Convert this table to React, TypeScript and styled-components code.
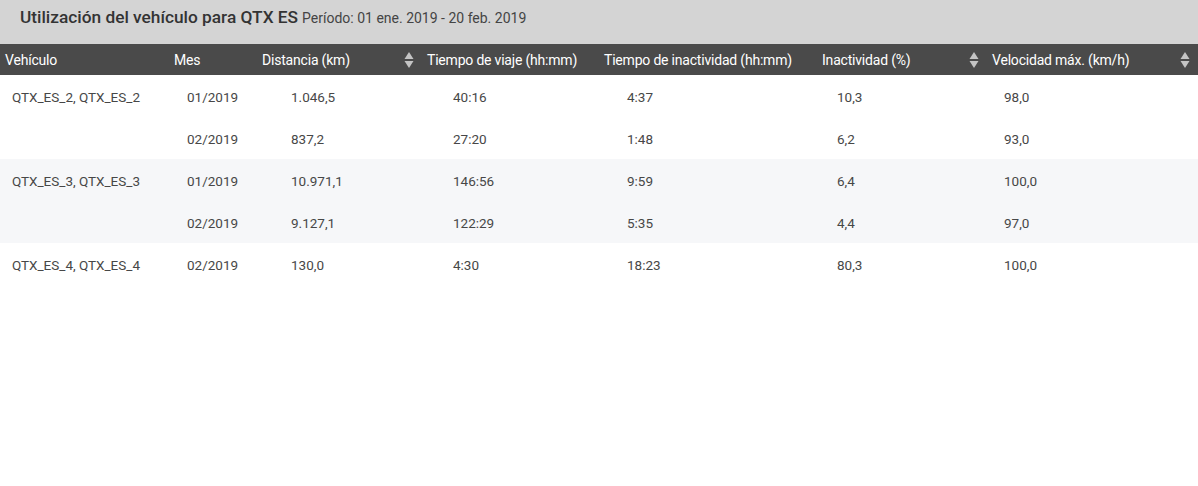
import React from "react";
import styled, { createGlobalStyle } from "styled-components";

const GlobalStyle = createGlobalStyle`
  html, body { margin: 0; padding: 0; background: #ffffff; }
  body { font-family: Roboto, "Liberation Sans", sans-serif; }
`;

const COLS = "169px 88px 165px 177px 218px 170px 211px";

const Page = styled.div`
  width: 1198px;
  height: 486px;
  background: #ffffff;
  display: flex;
  flex-direction: column;
`;

const TitleBar = styled.div`
  height: 44px;
  background: #d4d4d4;
  display: flex;
  align-items: flex-start;
  padding: 6px 0 0 20px;
  box-sizing: border-box;
  gap: 4px;
`;

const Title = styled.span`
  font-size: 17.3px;
  font-weight: 500;
  color: #333333;
  line-height: 22px;
`;

const Period = styled.span`
  font-size: 14px;
  color: #444444;
  line-height: 22px;
  padding-top: 1px;
`;

const HeaderRow = styled.div`
  display: grid;
  grid-template-columns: ${COLS};
  height: 31px;
  background: #4a4a4a;
`;

const HeadCell = styled.div`
  display: flex;
  align-items: center;
  justify-content: space-between;
  padding: 0 8px 0 5px;
  color: #ffffff;
  font-size: 14px;
  letter-spacing: -0.2px;
  white-space: nowrap;
`;

const SortIcon = styled.svg`
  width: 10px;
  height: 18px;
  flex: none;
`;

const Group = styled.div<{ $shade: boolean }>`
  background: ${(p) => (p.$shade ? "#f6f7f9" : "#ffffff")};
`;

const Row = styled.div`
  display: grid;
  grid-template-columns: ${COLS};
  height: 42px;
  align-items: center;
`;

const Cell = styled.div<{ $pad: number }>`
  padding: 2px 0 0 ${(p) => p.$pad}px;
  font-size: 13.5px;
  color: #474747;
  white-space: nowrap;
`;

const BODY_PAD = [12, 18, 34, 31, 28, 20, 17];

const headers: { label: string; sort?: boolean }[] = [
  { label: "Vehículo" },
  { label: "Mes" },
  { label: "Distancia (km)", sort: true },
  { label: "Tiempo de viaje (hh:mm)" },
  { label: "Tiempo de inactividad (hh:mm)" },
  { label: "Inactividad (%)", sort: true },
  { label: "Velocidad máx. (km/h)", sort: true },
];

const groups: { vehicle: string; rows: string[][] }[] = [
  {
    vehicle: "QTX_ES_2, QTX_ES_2",
    rows: [
      ["01/2019", "1.046,5", "40:16", "4:37", "10,3", "98,0"],
      ["02/2019", "837,2", "27:20", "1:48", "6,2", "93,0"],
    ],
  },
  {
    vehicle: "QTX_ES_3, QTX_ES_3",
    rows: [
      ["01/2019", "10.971,1", "146:56", "9:59", "6,4", "100,0"],
      ["02/2019", "9.127,1", "122:29", "5:35", "4,4", "97,0"],
    ],
  },
  {
    vehicle: "QTX_ES_4, QTX_ES_4",
    rows: [["02/2019", "130,0", "4:30", "18:23", "80,3", "100,0"]],
  },
];

const Sort = () => (
  <SortIcon viewBox="0 0 10 18">
    <path d="M5 1 L9.5 8 L0.5 8 Z" fill="#c4c4c4" />
    <path d="M5 17 L9.5 10 L0.5 10 Z" fill="#c4c4c4" />
  </SortIcon>
);

export default function App() {
  return (
    <>
      <GlobalStyle />
      <Page>
        <TitleBar>
          <Title>Utilización del vehículo para QTX ES</Title>
          <Period>Período: 01 ene. 2019 - 20 feb. 2019</Period>
        </TitleBar>
        <HeaderRow>
          {headers.map((h) => (
            <HeadCell key={h.label}>
              <span>{h.label}</span>
              {h.sort && <Sort />}
            </HeadCell>
          ))}
        </HeaderRow>
        {groups.map((g, gi) => (
          <Group key={g.vehicle} $shade={gi % 2 === 1}>
            {g.rows.map((r, ri) => (
              <Row key={ri}>
                <Cell $pad={BODY_PAD[0]}>{ri === 0 ? g.vehicle : ""}</Cell>
                {r.map((v, ci) => (
                  <Cell key={ci} $pad={BODY_PAD[ci + 1]}>
                    {v}
                  </Cell>
                ))}
              </Row>
            ))}
          </Group>
        ))}
      </Page>
    </>
  );
}
